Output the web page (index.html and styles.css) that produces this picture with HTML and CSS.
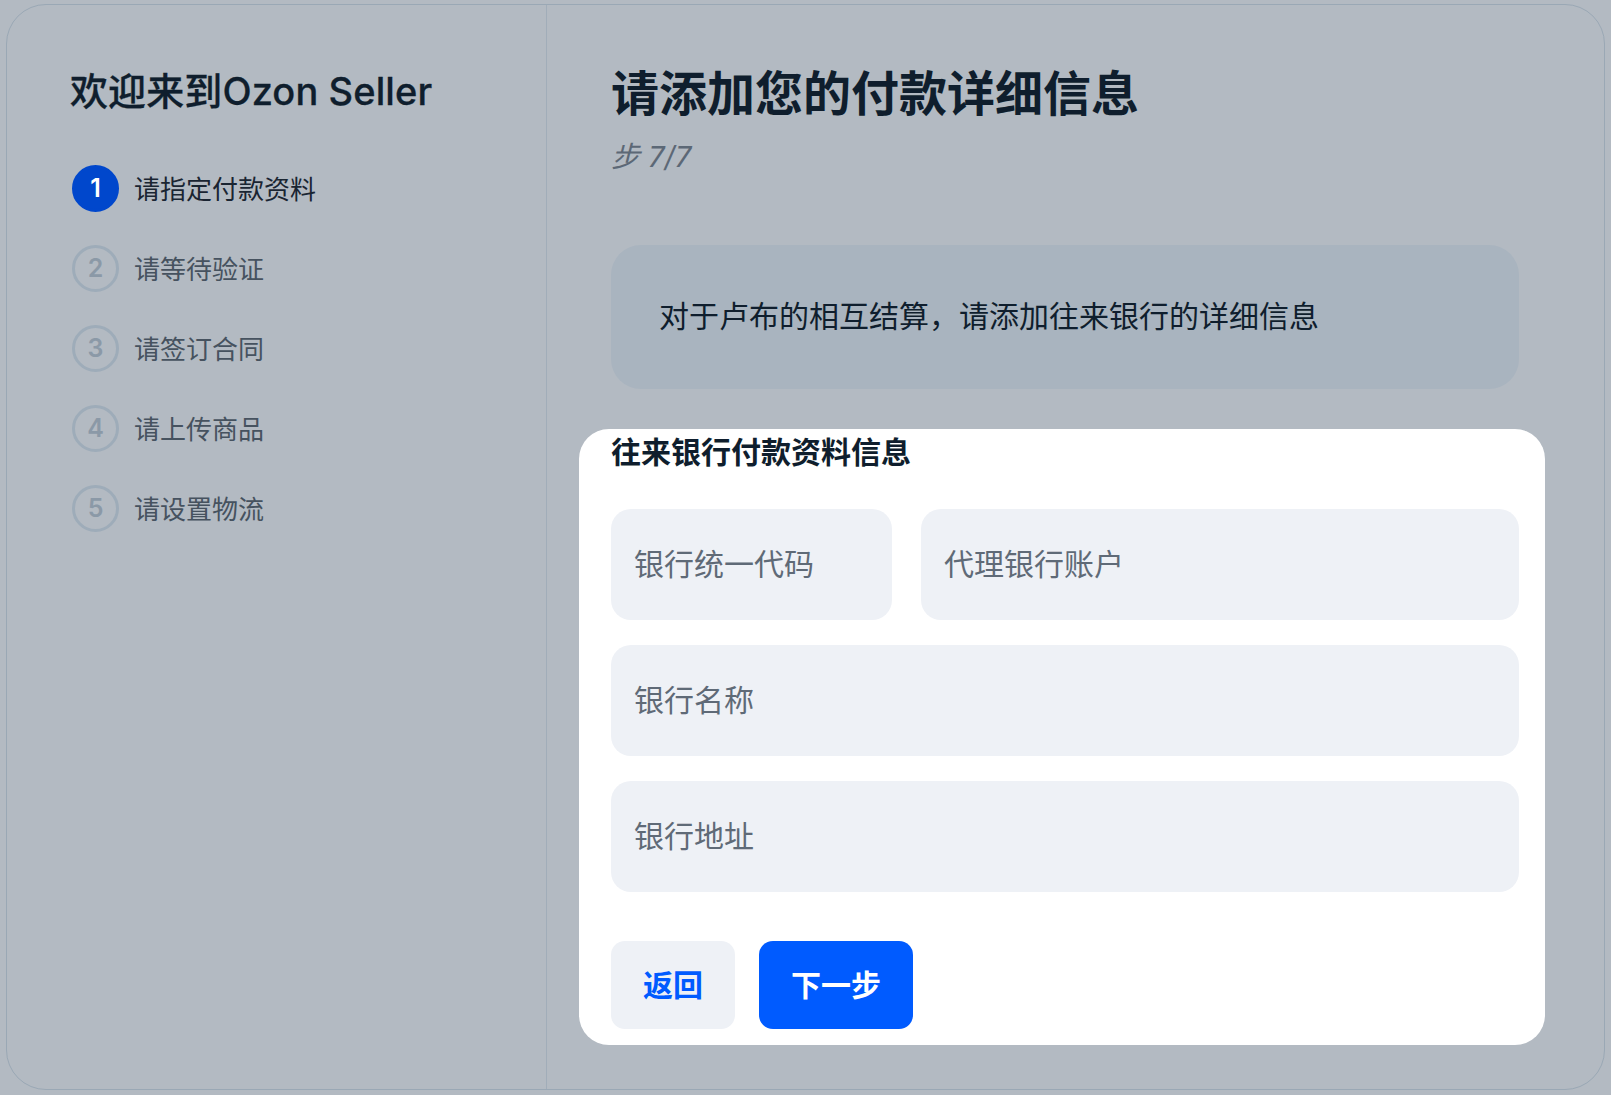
FILE: index.html
```html
<!DOCTYPE html>
<html lang="zh">
<head>
<meta charset="utf-8">
<title>Ozon Seller</title>
<link rel="stylesheet" href="styles.css">
</head>
<body>
<div class="frame">
  <aside class="side">
    <h1 class="side-title">欢迎来到Ozon Seller</h1>
    <ol class="steps">
      <li class="step active"><span class="num">1</span><span class="label">请指定付款资料</span></li>
      <li class="step"><span class="num">2</span><span class="label">请等待验证</span></li>
      <li class="step"><span class="num">3</span><span class="label">请签订合同</span></li>
      <li class="step"><span class="num">4</span><span class="label">请上传商品</span></li>
      <li class="step"><span class="num">5</span><span class="label">请设置物流</span></li>
    </ol>
  </aside>
  <main class="main">
    <h2 class="main-title">请添加您的付款详细信息</h2>
    <div class="step-count">步 7/7</div>
    <div class="info">对于卢布的相互结算，请添加往来银行的详细信息</div>
    <section class="card">
      <h3 class="card-title">往来银行付款资料信息</h3>
      <div class="fields">
        <div class="row row-split">
          <div class="field">银行统一代码</div>
          <div class="field">代理银行账户</div>
        </div>
        <div class="field">银行名称</div>
        <div class="field">银行地址</div>
      </div>
      <div class="actions">
        <button class="btn btn-back">返回</button>
        <button class="btn btn-next">下一步</button>
      </div>
    </section>
  </main>
</div>
</body>
</html>
```
FILE: styles.css
```css
* { box-sizing: border-box; }
html, body {
  margin: 0;
  padding: 0;
  background: #b3bac2;
  font-family: "Inter", "Noto Sans CJK SC", sans-serif;
  color: #0f1e2d;
}
body {
  padding: 4px 6px 5px 6px;
  height: 1095px;
  overflow: hidden;
}
.frame {
  height: 1086px;
  border: 1px solid #9aa8b5;
  border-radius: 40px;
  display: flex;
}
.side {
  width: 540px;
  flex: none;
  border-right: 1px solid #a1adb9;
  padding: 64px 0 0 63px;
}
.side-title {
  margin: 0;
  font-size: 38px;
  line-height: 44px;
  font-weight: 500;
  color: #0f1e2d;
  letter-spacing: 0.1px;
  -webkit-text-stroke: 0.3px #0f1e2d;
}
.steps {
  list-style: none;
  margin: 51px 0 0 2px;
  padding: 0;
  display: flex;
  flex-direction: column;
  gap: 32px;
}
.step {
  display: flex;
  align-items: center;
  gap: 15px;
  height: 48px;
}
.num {
  width: 47px;
  height: 47px;
  border-radius: 50%;
  border: 3px solid #9eacb9;
  display: flex;
  align-items: center;
  justify-content: center;
  font-size: 25px;
  font-weight: 600;
  color: #8b99a7;
}
.step.active .num {
  background: #0047cc;
  border-color: #0047cc;
  color: #ffffff;
}
.label {
  font-size: 26px;
  color: #46525f;
  padding-bottom: 2px;
}
.step.active .label { color: #1a2532; }
.main {
  flex: 1;
  padding: 60px 85px 0 64px;
  display: flex;
  flex-direction: column;
}
.main-title {
  margin: 0;
  font-size: 48px;
  line-height: 58px;
  font-weight: 700;
  color: #0f1e2d;
}
.step-count {
  margin-top: 16px;
  font-size: 29px;
  line-height: 36px;
  font-style: italic;
  color: #5c6876;
}
.info {
  margin-top: 70px;
  height: 144px;
  border-radius: 30px;
  background: #a9b4bf;
  display: flex;
  align-items: center;
  padding: 0 0 3px 48px;
  font-size: 30px;
  line-height: 40px;
  color: #0f1e2d;
}
.card {
  margin: 40px -26px 0 -32px;
  background: #ffffff;
  border-radius: 30px;
  padding: 3px 26px 16px 32px;
}
.card-title {
  margin: 0;
  font-size: 30px;
  line-height: 40px;
  font-weight: 700;
  color: #0f1e2d;
}
.fields {
  margin-top: 37px;
  display: flex;
  flex-direction: column;
  gap: 25px;
}
.row-split {
  display: grid;
  grid-template-columns: 281px 1fr;
  gap: 29px;
}
.field {
  height: 111px;
  border-radius: 20px;
  background: #eef1f6;
  display: flex;
  align-items: center;
  padding: 0 0 5px 23px;
  font-size: 30px;
  color: #5f6a77;
}
.actions {
  margin-top: 49px;
  display: flex;
  gap: 24px;
}
.btn {
  height: 88px;
  border: none;
  border-radius: 14px;
  padding: 0 0 5px 0;
  font-family: inherit;
  font-size: 30px;
  font-weight: 700;
  cursor: pointer;
}
.btn-back {
  width: 124px;
  background: #eef1f6;
  color: #005bff;
}
.btn-next {
  width: 154px;
  background: #005bff;
  color: #ffffff;
}
```
